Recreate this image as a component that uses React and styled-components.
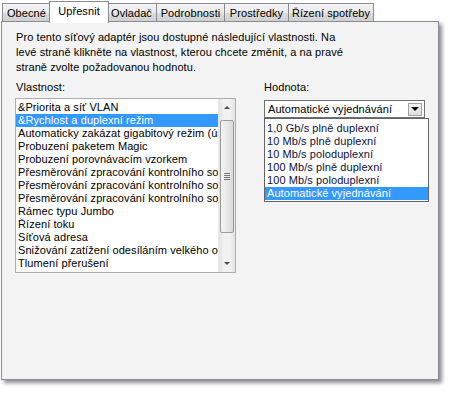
import styled, { createGlobalStyle } from 'styled-components'

const GlobalStyle = createGlobalStyle`
  html, body {
    margin: 0;
    padding: 0;
    background: #ffffff;
  }
  body {
    font-family: "Liberation Sans", Arial, sans-serif;
    font-size: 11px;
    letter-spacing: 0.08px;
    color: #000;
  }
`

const Window = styled.div`
  width: 455px;
  height: 395px;
  padding-left: 1px;
  box-sizing: border-box;
`

const TabStrip = styled.div`
  display: flex;
  align-items: flex-end;
  height: 22px;
  padding-left: 1px;
  position: relative;
  z-index: 2;
`

const Tab = styled.div`
  box-sizing: border-box;
  width: ${(p) => p.$w}px;
  height: ${(p) => (p.$active ? 22 : 19)}px;
  margin: 0 ${(p) => (p.$active ? -2 : 0)}px ${(p) => (p.$active ? -1 : 0)}px;
  margin-left: ${(p) => (p.$active ? -2 : -1)}px;
  border: 1px solid #898c95;
  border-bottom: ${(p) => (p.$active ? 'none' : '1px solid #898c95')};
  background: ${(p) =>
    p.$active ? '#ffffff' : 'linear-gradient(#f3f3f3 0%, #ebebeb 50%, #dddddd 51%, #cfcfcf 100%)'};
  display: flex;
  align-items: center;
  justify-content: center;
  padding-bottom: ${(p) => (p.$active ? 3 : 0)}px;
  white-space: nowrap;
  position: relative;
  z-index: ${(p) => (p.$active ? 2 : 1)};
  &:first-child {
    margin-left: 0;
  }
`

const Panel = styled.div`
  box-sizing: border-box;
  width: 438px;
  height: 359px;
  margin-top: -1px;
  border: 1px solid #898c95;
  background: #f3f3f3;
  box-shadow: 3px 3px 4px rgba(0, 0, 0, 0.45);
  padding: 8px 13px 0 13px;
  position: relative;
`

const Intro = styled.p`
  margin: 0 0 0 1px;
  line-height: 15px;
  width: 336px;
`

const Columns = styled.div`
  display: flex;
  gap: 27px;
  margin-top: 6px;
`

const Column = styled.div`
  display: flex;
  flex-direction: column;
  width: ${(p) => p.$w}px;
  position: relative;
`

const Label = styled.div`
  line-height: 13px;
  margin-left: ${(p) => p.$indent || 1}px;
  margin-bottom: ${(p) => p.$gap}px;
`

const ListBox = styled.div`
  box-sizing: border-box;
  height: 175px;
  border: 1px solid #abadb3;
  background: #fff;
  display: flex;
`

const Items = styled.div`
  flex: 1;
  padding-top: 2px;
  overflow: hidden;
`

const Item = styled.div`
  height: 13px;
  line-height: 13px;
  padding-left: 2px;
  white-space: nowrap;
  overflow: hidden;
  background: ${(p) => (p.$selected ? '#3399ff' : 'transparent')};
  color: ${(p) => (p.$selected ? '#fff' : '#000')};
`

const ScrollBar = styled.div`
  width: 16px;
  display: flex;
  flex-direction: column;
  align-items: center;
  background: linear-gradient(90deg, #e3e3e3, #f1f1f1 30%, #f1f1f1 70%, #e3e3e3);
  border-left: 1px solid #e8e8e8;
`

const ArrowBox = styled.div`
  height: 17px;
  width: 100%;
  display: flex;
  align-items: center;
  justify-content: center;
`

const Triangle = styled.div`
  width: 0;
  height: 0;
  border-left: 3px solid transparent;
  border-right: 3px solid transparent;
  ${(p) => (p.$up ? 'border-bottom: 3px solid #4d4d4d;' : 'border-top: 3px solid #4d4d4d;')}
`

const Thumb = styled.div`
  box-sizing: border-box;
  width: 14px;
  height: 113px;
  margin-top: 4px;
  border: 1px solid #9c9c9c;
  border-radius: 2px;
  background: linear-gradient(90deg, #f3f3f3, #e9e9e9 50%, #d9d9d9);
  display: flex;
  flex-direction: column;
  align-items: center;
  justify-content: center;
  gap: 1px;
`

const Grip = styled.div`
  width: 6px;
  height: 1px;
  background: #7a7a7a;
`

const Spacer = styled.div`
  flex: 1;
`

const Combo = styled.div`
  box-sizing: border-box;
  height: 18px;
  margin-left: 1px;
  border: 1px solid #707070;
  background: #fff;
  display: flex;
  align-items: center;
  padding: 0 2px 0 3px;
`

const ComboText = styled.div`
  flex: 1;
  white-space: nowrap;
`

const DropButton = styled.div`
  box-sizing: border-box;
  width: 14px;
  height: 13px;
  border: 1px solid #a0a0a0;
  background: linear-gradient(#f6f6f6, #dedede);
  display: flex;
  align-items: center;
  justify-content: center;
`

const DropArrow = styled.div`
  width: 0;
  height: 0;
  border-left: 4px solid transparent;
  border-right: 4px solid transparent;
  border-top: 4px solid #000;
`

const DropList = styled.div`
  position: absolute;
  left: 1px;
  top: 37px;
  box-sizing: border-box;
  width: 165px;
  border: 1px solid #646464;
  background: #fff;
  padding: 3px 0 1px;
`

const DropItem = styled(Item)`
  padding-left: 2px;
  color: ${(p) => (p.$selected ? '#fff' : '#10103a')};
`

const properties = [
  '&Priorita a síť VLAN',
  '&Rychlost a duplexní režim',
  'Automaticky zakázat gigabitový režim (úsporný režim)',
  'Probuzení paketem Magic',
  'Probuzení porovnávacím vzorkem',
  'Přesměrování zpracování kontrolního součtu IPv4',
  'Přesměrování zpracování kontrolního součtu TCP',
  'Přesměrování zpracování kontrolního součtu UDP',
  'Rámec typu Jumbo',
  'Řízení toku',
  'Síťová adresa',
  'Snižování zatížení odesíláním velkého objemu',
  'Tlumení přerušení',
]

const values = [
  '1,0 Gb/s plně duplexní',
  '10 Mb/s plně duplexní',
  '10 Mb/s poloduplexní',
  '100 Mb/s plně duplexní',
  '100 Mb/s poloduplexní',
  'Automatické vyjednávání',
]

const tabs = [
  { label: 'Obecné', w: 49 },
  { label: 'Upřesnit', w: 60, active: true },
  { label: 'Ovladač', w: 51 },
  { label: 'Podrobnosti', w: 69 },
  { label: 'Prostředky', w: 65 },
  { label: 'Řízení spotřeby', w: 86 },
]

const App = () => {
  return (
    <Window>
      <GlobalStyle />
      <TabStrip>
        {tabs.map((t) => (
          <Tab key={t.label} $w={t.w} $active={t.active}>
            {t.label}
          </Tab>
        ))}
      </TabStrip>
      <Panel>
        <Intro>
          Pro tento síťový adaptér jsou dostupné následující vlastnosti. Na levé straně klikněte na
          vlastnost, kterou chcete změnit, a na pravé straně zvolte požadovanou hodnotu.
        </Intro>
        <Columns>
          <Column $w={221}>
            <Label $gap={4}>Vlastnost:</Label>
            <ListBox>
              <Items>
                {properties.map((p, i) => (
                  <Item key={p} $selected={i === 1}>
                    {p}
                  </Item>
                ))}
              </Items>
              <ScrollBar>
                <ArrowBox>
                  <Triangle $up />
                </ArrowBox>
                <Thumb>
                  <Grip />
                  <Grip />
                  <Grip />
                  <Grip />
                </Thumb>
                <Spacer />
                <ArrowBox>
                  <Triangle />
                </ArrowBox>
              </ScrollBar>
            </ListBox>
          </Column>
          <Column $w={166}>
            <Label $gap={6} $indent={0}>
              Hodnota:
            </Label>
            <Combo>
              <ComboText>Automatické vyjednávání</ComboText>
              <DropButton>
                <DropArrow />
              </DropButton>
            </Combo>
            <DropList>
              {values.map((v, i) => (
                <DropItem key={v} $selected={i === values.length - 1}>
                  {v}
                </DropItem>
              ))}
            </DropList>
          </Column>
        </Columns>
      </Panel>
    </Window>
  )
}

export default App
